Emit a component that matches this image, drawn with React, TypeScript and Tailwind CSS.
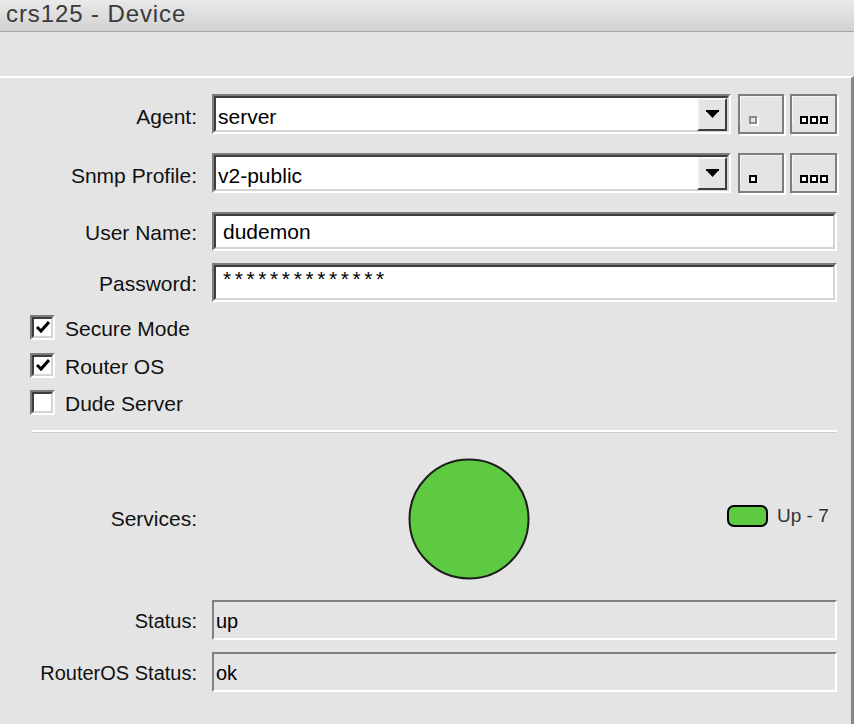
import type { ReactNode } from 'react';

const FONT = { fontFamily: '"Liberation Sans", Arial, sans-serif' };
const GREEN = '#5dca41';

const Label = ({ children, size = 'text-[21px]', pad = 'pt-[1px]' }: { children: ReactNode; size?: string; pad?: string }) => (
  <div className={`w-[197px] shrink-0 text-right leading-none text-[#111] ${size} ${pad}`}>{children}</div>
);

// two-tone sunken border used by editable fields
const Sunken = ({ children, className = '' }: { children: ReactNode; className?: string }) => (
  <div className={`border-2 border-t-[#7c7c7c] border-l-[#7c7c7c] border-b-white border-r-white ${className}`}>
    <div className="flex h-full items-center border-2 border-t-[#3d3d3d] border-l-[#3d3d3d] border-b-[#d4d4d4] border-r-[#d4d4d4] bg-white">
      {children}
    </div>
  </div>
);

const Square = ({ tone = 'dark' }: { tone?: 'dark' | 'muted' }) =>
  tone === 'dark' ? (
    <span className="block h-[8px] w-[8px] border-2 border-black bg-white" />
  ) : (
    <span className="block h-[8px] w-[8px] border-2 border-[#8a8a8a] bg-[#e4e4e4] shadow-[2px_2px_0_#fff]" />
  );

const SmallButton = ({ children, className = '' }: { children: ReactNode; className?: string }) => (
  <button className={`flex h-[40px] items-end border-2 border-[#7e7e7e] bg-[#e4e4e4] pb-[8px] shadow-[2px_2px_0_#fff] ${className}`}>
    <div className="flex h-full w-full items-end border-t border-l border-[#f4f4f4]">{children}</div>
  </button>
);

const DropArrow = () => (
  <div className="flex h-[33px] w-[30px] items-center justify-center border-2 border-t-[#f6f6f6] border-l-[#f6f6f6] border-b-[#3d3d3d] border-r-[#3d3d3d] bg-[#e4e4e4]">
    <svg width="13" height="8" viewBox="0 0 13 8">
      <rect x="0" y="0" width="13" height="2" fill="#000" />
      <path d="M1 2 H12 L6.5 8 Z" fill="#000" />
    </svg>
  </div>
);

const SelectRow = ({ label, value, mutedSingle, className = '' }: { label: string; value: string; mutedSingle?: boolean; className?: string }) => (
  <div className={`flex h-[40px] items-center ${className}`}>
    <Label pad="pt-[5px]">{label}</Label>
    <Sunken className="ml-[15px] h-full w-[519px]">
      <span className="flex-1 pl-[2px] pt-[5px] text-[21px] leading-none text-black">{value}</span>
      <DropArrow />
    </Sunken>
    <SmallButton className="ml-[7px] w-[46px]">
      <div className="pl-[8px]">
        <Square tone={mutedSingle ? 'muted' : 'dark'} />
      </div>
    </SmallButton>
    <SmallButton className="ml-[6px] w-[47px]">
      <div className="flex w-full justify-center gap-[2px]">
        <Square />
        <Square />
        <Square />
      </div>
    </SmallButton>
  </div>
);

const TextRow = ({ label, children, className = '' }: { label: string; children: ReactNode; className?: string }) => (
  <div className={`flex h-[39px] items-center ${className}`}>
    <Label>{label}</Label>
    <Sunken className="ml-[15px] h-full flex-1">
      <span className="pl-[7px] text-[21px] leading-none text-black">{children}</span>
    </Sunken>
  </div>
);

const Check = ({ checked, label, className = '' }: { checked: boolean; label: string; className?: string }) => (
  <div className={`flex h-[25px] items-center ${className}`}>
    <div className="h-[25px] w-[25px] border-2 border-t-[#7c7c7c] border-l-[#7c7c7c] border-b-white border-r-white">
      <div className="flex h-full w-full items-center justify-center border-2 border-t-[#3d3d3d] border-l-[#3d3d3d] border-b-[#d4d4d4] border-r-[#d4d4d4] bg-white">
        {checked && (
          <svg width="14" height="13" viewBox="0 0 14 13">
            <path d="M1 6 L5 10 L13 1" fill="none" stroke="#000" strokeWidth="3" />
          </svg>
        )}
      </div>
    </div>
    <span className="ml-[10px] pt-[2px] text-[21px] leading-none text-[#111]">{label}</span>
  </div>
);

const ReadOnlyRow = ({ label, value, className = '' }: { label: string; value: string; className?: string }) => (
  <div className={`flex h-[40px] items-center ${className}`}>
    <Label size="text-[20px]" pad="pt-[2px]">{label}</Label>
    <div className="ml-[15px] flex h-full flex-1 items-center border-2 border-t-[#808080] border-l-[#808080] border-b-white border-r-white bg-[#e4e4e4]">
      <span className="pl-[2px] pt-[2px] text-[20px] leading-none text-black">{value}</span>
    </div>
  </div>
);

export default function App() {
  return (
    <div className="min-h-[724px] w-[854px] overflow-hidden bg-[#e4e4e4]" style={FONT}>
      <div className="h-[32px] border-b border-[#a6a6a6] bg-gradient-to-b from-[#e9e9e9] to-[#d2d2d2] pl-[6px]">
        <div className="text-[24px] leading-[27px] tracking-[0.9px] text-[#3a3a3a]">crs125 - Device</div>
      </div>

      <div className="mt-[44px] min-h-[648px] border-t-2 border-r-[3px] border-t-white border-r-[#868686] pr-[14px] pt-[16px]">
        <SelectRow label="Agent:" value="server" mutedSingle />
        <SelectRow label="Snmp Profile:" value="v2-public" className="mt-[19px]" />
        <TextRow label="User Name:" className="mt-[19px]">dudemon</TextRow>
        <TextRow label="Password:" className="mt-[12px]">
          <span className="relative top-[-4px] tracking-[3.6px]">**************</span>
        </TextRow>

        <div className="pl-[30px]">
          <Check checked label="Secure Mode" className="mt-[13px]" />
          <Check checked label="Router OS" className="mt-[13px]" />
          <Check checked={false} label="Dude Server" className="mt-[12px]" />
        </div>

        <div className="ml-[32px] mt-[15px] border-t-2 border-b border-t-white border-b-[#cfcfcf]" />

        <div className="mt-[25px] flex h-[121px] items-center">
          <Label pad="pt-0">Services:</Label>
          <svg className="ml-[211px] shrink-0" width="122" height="122" viewBox="0 0 122 122">
            <circle cx="61" cy="61" r="59.5" fill={GREEN} stroke="#1c1c1c" strokeWidth="2" />
          </svg>
          <div className="ml-[197px] mb-[6px] flex items-center">
            <span className="block h-[22px] w-[41px] rounded-[7px] border-2 border-black" style={{ backgroundColor: GREEN }} />
            <span className="ml-[9px] text-[19px] leading-none text-[#333]">Up - 7</span>
          </div>
        </div>

        <ReadOnlyRow label="Status:" value="up" className="mt-[21px]" />
        <ReadOnlyRow label="RouterOS Status:" value="ok" className="mt-[12px]" />
      </div>
    </div>
  );
}
